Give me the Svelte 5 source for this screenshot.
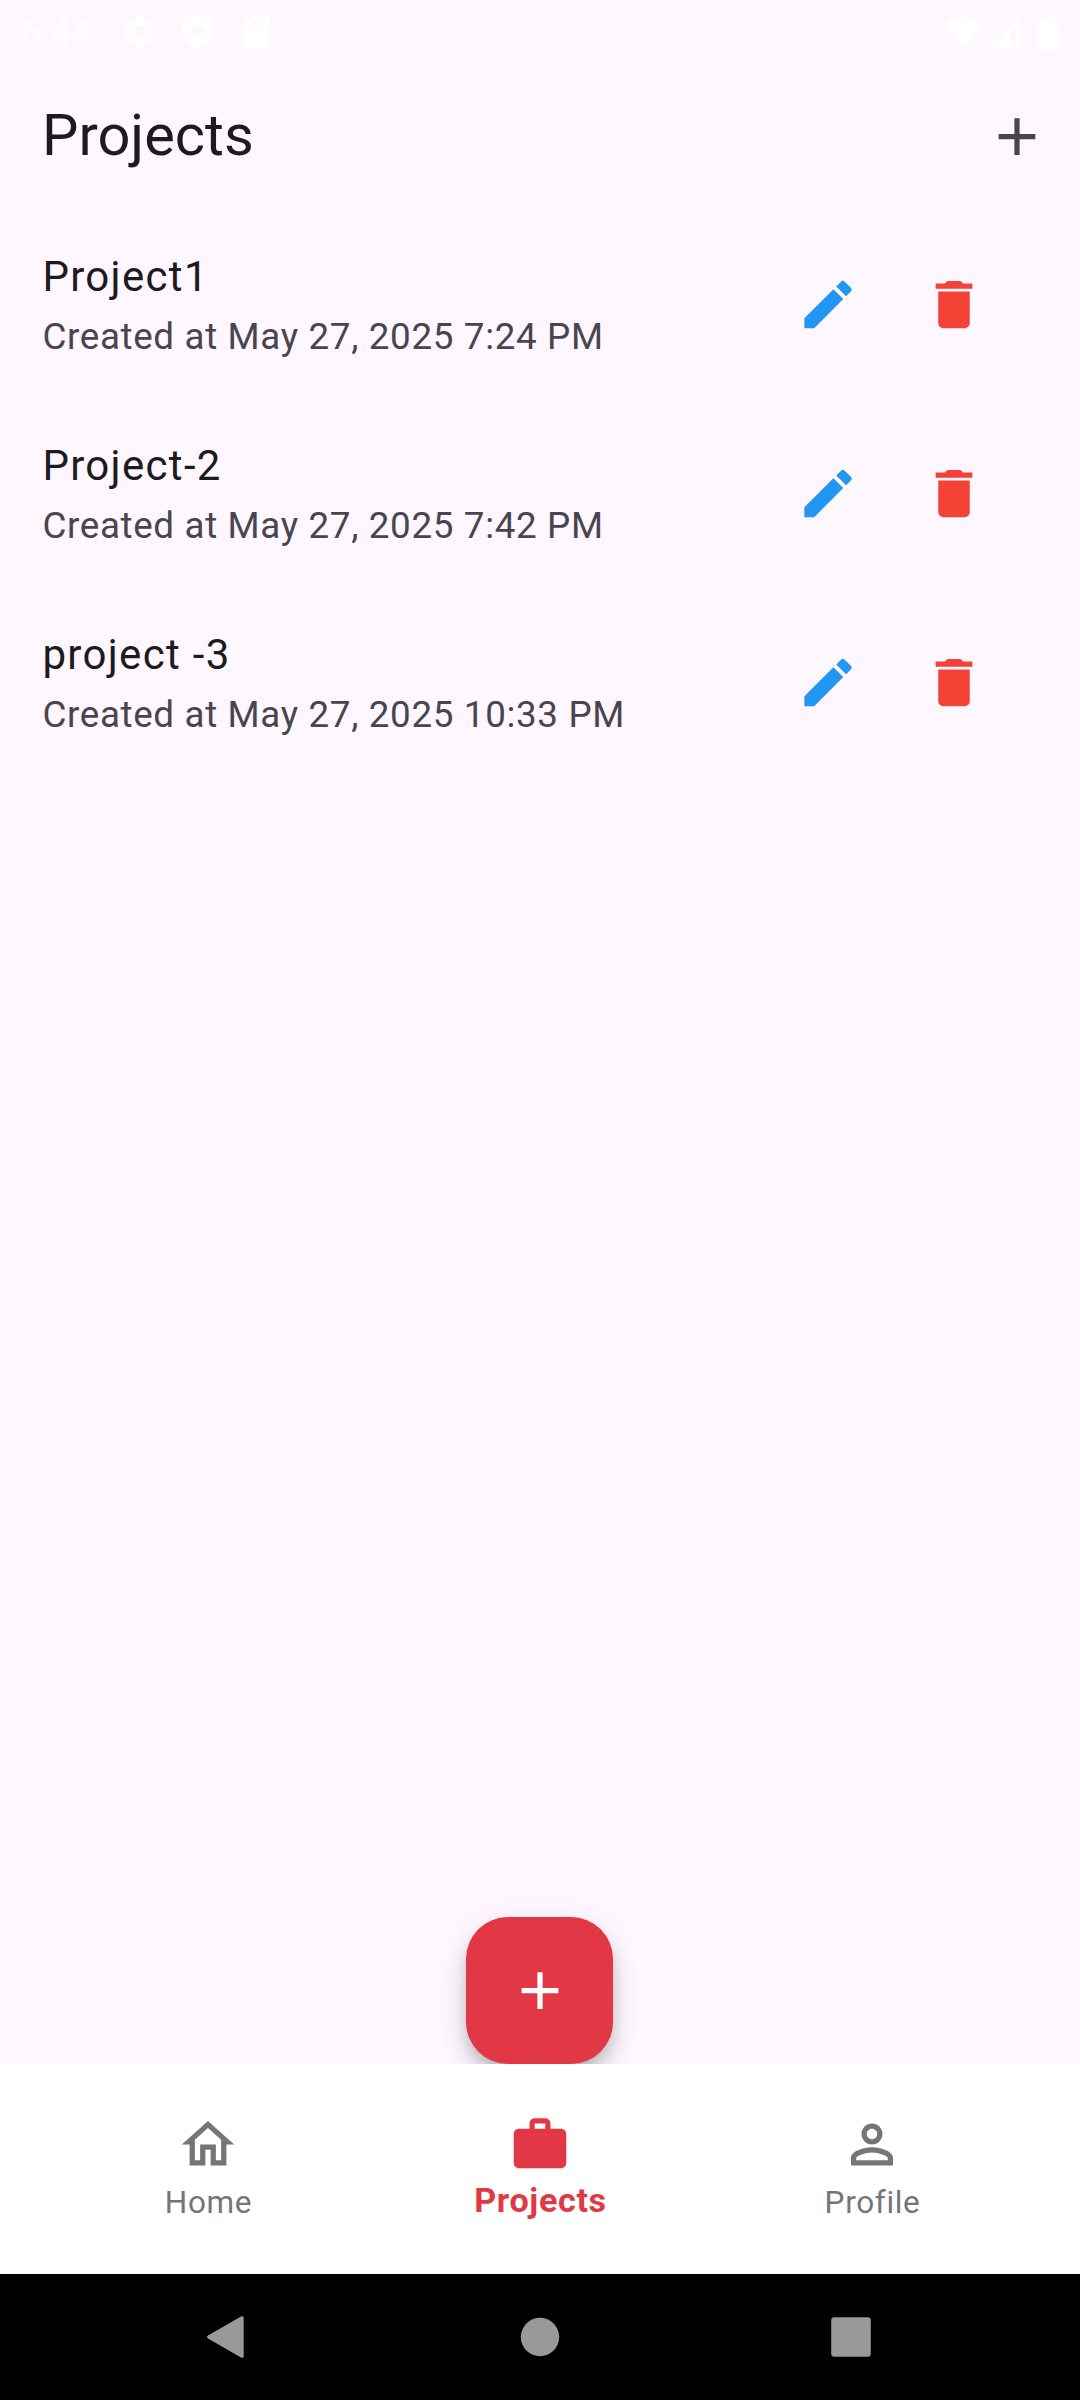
<script>
  const icons = {
    edit: 'M3 17.25V21h3.75L17.81 9.94l-3.75-3.75L3 17.25zM20.71 7.04c.39-.39.39-1.02 0-1.41l-2.34-2.34a.9959.9959 0 0 0-1.41 0l-1.83 1.83 3.75 3.75 1.83-1.83z',
    trash: 'M6 19c0 1.1.9 2 2 2h8c1.1 0 2-.9 2-2V7H6v12zM19 4h-3.5l-1-1h-5l-1 1H5v2h14V4z',
    add: 'M19 13h-6v6h-2v-6H5v-2h6V5h2v6h6v2z',
    home: 'M12 5.69l5 4.5V18h-2v-6H9v6H7v-7.81l5-4.5M12 3L2 12h3v8h6v-6h2v6h6v-8h3L12 3z',
    work: 'M20 6h-4V4c0-1.11-.89-2-2-2h-4c-1.11 0-2 .89-2 2v2H4c-1.11 0-2 .89-2 2v11c0 1.11.89 2 2 2h16c1.11 0 2-.89 2-2V8c0-1.11-.89-2-2-2zm-6 0h-4V4h4v2z',
    person: 'M12 6c1.1 0 2 .9 2 2s-.9 2-2 2-2-.9-2-2 .9-2 2-2m0 9c2.7 0 5.8 1.29 6 2v1H6v-.99c.2-.72 3.3-2.01 6-2.01m0-11C9.79 4 8 5.79 8 8s1.79 4 4 4 4-1.79 4-4-1.79-4-4-4zm0 9c-2.67 0-8 1.34-8 4v3h16v-3c0-2.66-5.33-4-8-4z',
    settings: 'M19.14 12.94c.04-.3.06-.61.06-.94 0-.32-.02-.64-.07-.94l2.03-1.58c.18-.14.23-.41.12-.61l-1.92-3.32c-.12-.22-.37-.29-.59-.22l-2.39.96c-.5-.38-1.03-.7-1.62-.94L14.4 2.81c-.04-.24-.24-.41-.48-.41h-3.84c-.24 0-.43.17-.47.41l-.36 2.54c-.59.24-1.13.57-1.62.94l-2.39-.96c-.22-.08-.47 0-.59.22L2.74 8.87c-.12.21-.08.47.12.61l2.03 1.58c-.05.3-.09.63-.09.94s.02.64.07.94l-2.03 1.58c-.18.14-.23.41-.12.61l1.92 3.32c.12.22.37.29.59.22l2.39-.96c.5.38 1.03.7 1.62.94l.36 2.54c.05.24.24.41.48.41h3.84c.24 0 .44-.17.47-.41l.36-2.54c.59-.24 1.13-.56 1.62-.94l2.39.96c.22.08.47 0 .59-.22l1.92-3.32c.12-.22.07-.47-.12-.61l-2.01-1.58zM12 15.6c-1.98 0-3.6-1.62-3.6-3.6s1.62-3.6 3.6-3.6 3.6 1.62 3.6 3.6-1.62 3.6-3.6 3.6z',
    shield: 'M12 1.2L2.8 4.5v6.3c0 5.5 3.8 10 9.2 11.6 5.4-1.6 9.2-6.1 9.2-11.6V4.5zM9 7.3v9.2l8.3-4.6z',
    sd: 'M18 2h-8L4.02 8 4 20c0 1.1.9 2 2 2h12c1.1 0 2-.9 2-2V4c0-1.1-.9-2-2-2zm-6 6h-2V4h2v4zm3 0h-2V4h2v4zm3 0h-2V4h2v4z',
  }

  const projects = [
    { name: 'Project1', created: 'May 27, 2025 7:24 PM' },
    { name: 'Project-2', created: 'May 27, 2025 7:42 PM' },
    { name: 'project -3', created: 'May 27, 2025 10:33 PM' },
  ]

  const tabs = [
    { label: 'Home', icon: icons.home },
    { label: 'Projects', icon: icons.work, active: true },
    { label: 'Profile', icon: icons.person },
  ]
</script>

{#snippet icon(path)}
  <svg class="icon" viewBox="0 0 24 24" aria-hidden="true"><path fill-rule="evenodd" d={path} /></svg>
{/snippet}

<div class="screen">
  <div class="status">
    <span class="time">6:44</span>
    <div class="notifications">
      {@render icon(icons.settings)}
      {@render icon(icons.shield)}
      {@render icon(icons.sd)}
    </div>
    <svg class="signals" viewBox="0 0 120 40" aria-hidden="true">
      <path d="M5 13.5Q24.5-4.5 44 13.5L24.5 37z" />
      <path fill-rule="evenodd" d="M48 37L80 5v32zM70 19v15h6V13z" />
      <path d="M104 4h9v4h4q2 0 2 2v26q0 2-2 2h-16q-2 0-2-2V10q0-2 2-2h3z" />
    </svg>
  </div>

  <header>
    <h1>Projects</h1>
    <button class="action" aria-label="Add project">{@render icon(icons.add)}</button>
  </header>

  <main>
    {#each projects as project}
      <article>
        <div class="details">
          <h2>{project.name}</h2>
          <p>Created at {project.created}</p>
        </div>
        <button class="action edit" aria-label="Edit">{@render icon(icons.edit)}</button>
        <button class="action delete" aria-label="Delete">{@render icon(icons.trash)}</button>
      </article>
    {/each}
    <button class="fab" aria-label="New project">{@render icon(icons.add)}</button>
  </main>

  <nav>
    {#each tabs as tab}
      <button class="tab" class:active={tab.active}>
        {@render icon(tab.icon)}
        <span>{tab.label}</span>
      </button>
    {/each}
  </nav>

  <div class="system">
    <svg viewBox="0 0 42 42" aria-hidden="true"><path d="M3 19.5L36 .6q2.700-1.300 2.700 1.500v37.800q0 2.800-2.700 1.500L3 22.500q-2-1.500 0-3z" /></svg>
    <svg viewBox="0 0 42 42" aria-hidden="true"><circle cx="21" cy="21" r="19.2" /></svg>
    <svg viewBox="0 0 42 42" aria-hidden="true"><rect x="1.200" y="1.200" width="39.600" height="39.600" rx="3" /></svg>
  </div>
</div>

<style>
  :global(body) {
    margin: 0;
  }

  .screen {
    display: flex;
    flex-direction: column;
    width: 1080px;
    height: 2400px;
    background: #fef7ff;
    color: #1d1b20;
    font-family: Roboto, sans-serif;
  }

  button {
    padding: 0;
    border: 0;
    background: none;
    color: inherit;
    font: inherit;
  }

  h1,
  h2,
  p {
    margin: 0;
    font-weight: 400;
  }

  .icon {
    display: block;
    flex: none;
    width: 63px;
    height: 63px;
    fill: currentColor;
  }

  .status {
    display: flex;
    align-items: center;
    box-sizing: border-box;
    height: 63px;
    padding-left: 21px;
    color: #fff;
  }

  .time {
    width: 99px;
    font-size: 36.75px;
    line-height: 43px;
    padding-top: 2px;
  }

  .notifications {
    display: flex;
    gap: 18.6px;
  }

  .notifications .icon {
    width: 39.4px;
    height: 39.4px;
  }

  .signals {
    width: 120px;
    height: 40px;
    margin: 0 20px 0 auto;
    fill: #fff;
  }

  header {
    display: flex;
    align-items: center;
    justify-content: space-between;
    height: 147px;
    padding-left: 42px;
  }

  h1 {
    padding-bottom: 2px;
    font-size: 57.75px;
    line-height: 73px;
  }

  .action {
    display: flex;
    align-items: center;
    justify-content: center;
    width: 126px;
    height: 126px;
    color: #49454f;
  }

  /* 63px icons sit on a half pixel in even-width boxes */
  .action .icon,
  .tab .icon {
    margin-right: 1px;
  }

  .action path,
  .fab path,
  .tab path {
    transform: translateX(0.19px);
  }

  main {
    display: flex;
    flex: 1;
    flex-direction: column;
    overflow: hidden;
  }

  article {
    display: flex;
    align-items: center;
    height: 189px;
    padding: 0 63px 0 42px;
  }

  .details {
    flex: 1;
    padding: 0 0 2px 0.4px;
  }

  h2 {
    padding-bottom: 3px;
    font-size: 42px;
    line-height: 63px;
    letter-spacing: 1.3125px;
  }

  p {
    color: #49454f;
    font-size: 36.75px;
    line-height: 52px;
    letter-spacing: 0.656px;
  }

  .edit {
    color: #2196f3;
  }

  .delete {
    color: #f44336;
  }

  .fab {
    display: grid;
    place-items: center;
    align-self: center;
    width: 147px;
    height: 147px;
    margin: auto 1px 0 0;
    border-radius: 42px;
    background: #e23744;
    box-shadow:
      0 8px 13px -3px rgb(0 0 0 / 16%),
      0 16px 26px rgb(0 0 0 / 14%),
      0 4px 36px rgb(0 0 0 / 5%);
    color: #fff;
  }

  nav {
    display: flex;
    height: 210px;
    padding: 0 42px;
    background: #fff;
  }

  .tab {
    display: flex;
    flex: 1;
    flex-direction: column;
    align-items: center;
    padding-top: 49px;
    color: #757575;
    font-size: 31.5px;
    line-height: 42px;
    letter-spacing: 0.656px;
  }

  .tab span {
    margin-top: 6px;
    padding-left: 1px;
  }

  .tab.active {
    color: #e23744;
    font-size: 34.125px;
    font-weight: 700;
  }

  .tab.active span {
    margin-top: 3px;
  }

  .system {
    display: flex;
    align-items: center;
    justify-content: space-between;
    height: 126px;
    padding: 0 208px 0 205px;
    background: #000;
  }

  .system svg {
    width: 42px;
    height: 42px;
    fill: #999;
  }

  .system svg:nth-child(2) {
    margin-left: 3px;
  }
</style>
